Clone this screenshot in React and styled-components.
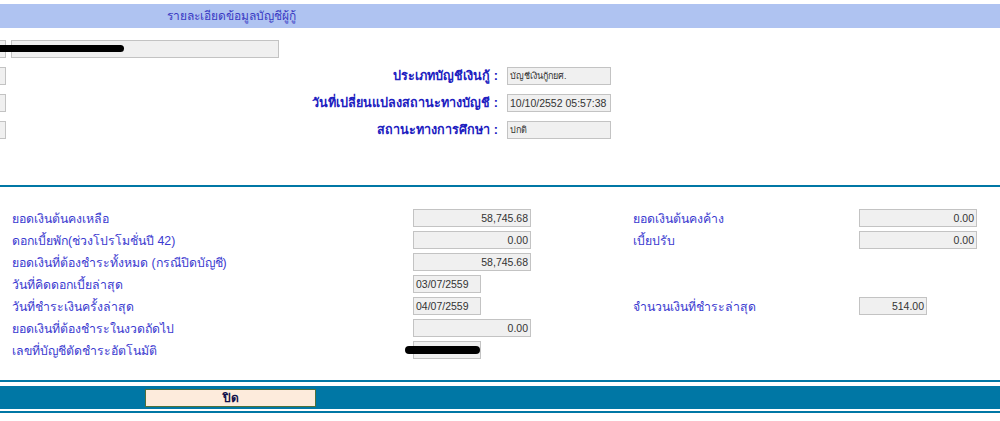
import React from 'react';
import styled, { createGlobalStyle } from 'styled-components';

const GlobalStyle = createGlobalStyle`
  body {
    margin: 0;
    background: #ffffff;
    font-family: Tahoma, "Liberation Sans", "Noto Sans", sans-serif;
  }
`;

const Page = styled.div`
  width: 1000px;
  height: 421px;
  overflow: hidden;
  padding-top: 4px;
  box-sizing: border-box;
`;

const Header = styled.div`
  height: 24px;
  background-color: #afc3f1;
  color: #3a3ac4;
  font-size: 12px;
  line-height: 24px;
  padding-left: 167px;
`;

const TopSection = styled.div`
  position: relative;
  display: flex;
  flex-direction: column;
  gap: 9px;
  padding-top: 12px;
  height: 145px;
`;

const TopRow = styled.div`
  display: flex;
  align-items: center;
  height: 18px;
`;

const Stub = styled.div`
  width: 6px;
  height: 18px;
  box-sizing: border-box;
  border: 1px solid #c3c3c3;
  border-left: none;
  background: #f0f0f0;
`;

const BoldLabel = styled.div`
  width: 501px;
  text-align: right;
  font-size: 12.6px;
  font-weight: bold;
  color: #2020c0;
  padding-right: 9px;
  box-sizing: border-box;
`;

const Field = styled.div`
  position: relative;
  width: ${p => p.$w}px;
  height: 18px;
  box-sizing: border-box;
  border: 1px solid #c3c3c3;
  background: #f0f0f0;
  font-family: "Liberation Sans", Tahoma, sans-serif;
  font-size: ${p => (p.$small ? 9 : 10.5)}px;
  color: #333333;
  line-height: 16px;
  padding: 0 2px;
  text-align: ${p => (p.$right ? 'right' : 'left')};
  margin-left: ${p => p.$ml || 0}px;
  white-space: nowrap;
`;

const Redact = styled.span`
  position: absolute;
  top: 4px;
  left: -9px;
  width: 75px;
  height: 8px;
  background: #000;
  border-radius: 4px;
`;

const RedactOuter = styled.div`
  position: absolute;
  top: 17px;
  left: 0;
  width: 124px;
  height: 7px;
  background: #000;
  border-radius: 0 4px 4px 0;
`;

const Rule = styled.div`
  height: 2px;
  background: #0077a5;
`;

const LowerGrid = styled.div`
  display: grid;
  grid-template-columns: 401px 220px 226px 120px;
  grid-auto-rows: 18px;
  row-gap: 4px;
  padding: 22px 0 0 12px;
  height: 193px;
  box-sizing: border-box;
  align-items: center;
  align-content: start;
`;

const Label = styled.div`
  font-size: 12.3px;
  color: #3a3ad0;
  white-space: nowrap;
`;

const Bar = styled.div`
  margin-top: 4px;
  height: 23px;
  background: #0077a5;
  display: flex;
  align-items: center;
  padding-left: 145px;
`;

const CloseButton = styled.button`
  width: 171px;
  height: 18px;
  padding: 0;
  background: #fdebdc;
  border: 1px solid #50703a;
  color: #10104a;
  font-family: Tahoma, "Liberation Sans", sans-serif;
  font-size: 12px;
  font-weight: bold;
  line-height: 16px;
  cursor: pointer;
`;

const BottomRule = styled(Rule)`
  margin-top: 2px;
`;

const rows = [
  ['ยอดเงินต้นคงเหลือ', '58,745.68', 118, 'ยอดเงินต้นคงค้าง', '0.00', 118],
  ['ดอกเบี้ยพัก(ช่วงโปรโมชั่นปี 42)', '0.00', 118, 'เบี้ยปรับ', '0.00', 118],
  ['ยอดเงินที่ต้องชำระทั้งหมด (กรณีปิดบัญชี)', '58,745.68', 118],
  ['วันที่คิดดอกเบี้ยล่าสุด', '03/07/2559', 68, null, null, null, true],
  ['วันที่ชำระเงินครั้งล่าสุด', '04/07/2559', 68, 'จำนวนเงินที่ชำระล่าสุด', '514.00', 68, true],
  ['ยอดเงินที่ต้องชำระในงวดถัดไป', '0.00', 118],
  ['เลขที่บัญชีตัดชำระอัตโนมัติ', '', 68, null, null, null, false, true],
];

export default function App() {
  return (
    <Page>
      <GlobalStyle />
      <Header>รายละเอียดข้อมูลบัญชีผู้กู้</Header>
      <TopSection>
        <TopRow>
          <Stub />
          <Field $w={268} $ml={5} />
        </TopRow>
        <TopRow>
          <Stub />
          <BoldLabel>ประเภทบัญชีเงินกู้ :</BoldLabel>
          <Field $w={104} $small>บัญชีเงินกู้กยศ.</Field>
        </TopRow>
        <TopRow>
          <Stub />
          <BoldLabel>วันที่เปลี่ยนแปลงสถานะทางบัญชี :</BoldLabel>
          <Field $w={104}>10/10/2552 05:57:38</Field>
        </TopRow>
        <TopRow>
          <Stub />
          <BoldLabel>สถานะทางการศึกษา :</BoldLabel>
          <Field $w={104} $small>ปกติ</Field>
        </TopRow>
        <RedactOuter />
      </TopSection>
      <Rule />
      <LowerGrid>
        {rows.map(([l1, v1, w1, l2, v2, w2, date, redact]) => (
          <React.Fragment key={l1}>
            <Label>{l1}</Label>
            <div>
              <Field $w={w1} $right={!date && !redact}>
                {v1}
                {redact && <Redact />}
              </Field>
            </div>
            <Label>{l2}</Label>
            <div>{v2 && <Field $w={w2} $right>{v2}</Field>}</div>
          </React.Fragment>
        ))}
      </LowerGrid>
      <Rule />
      <Bar>
        <CloseButton>ปิด</CloseButton>
      </Bar>
      <BottomRule />
    </Page>
  );
}
